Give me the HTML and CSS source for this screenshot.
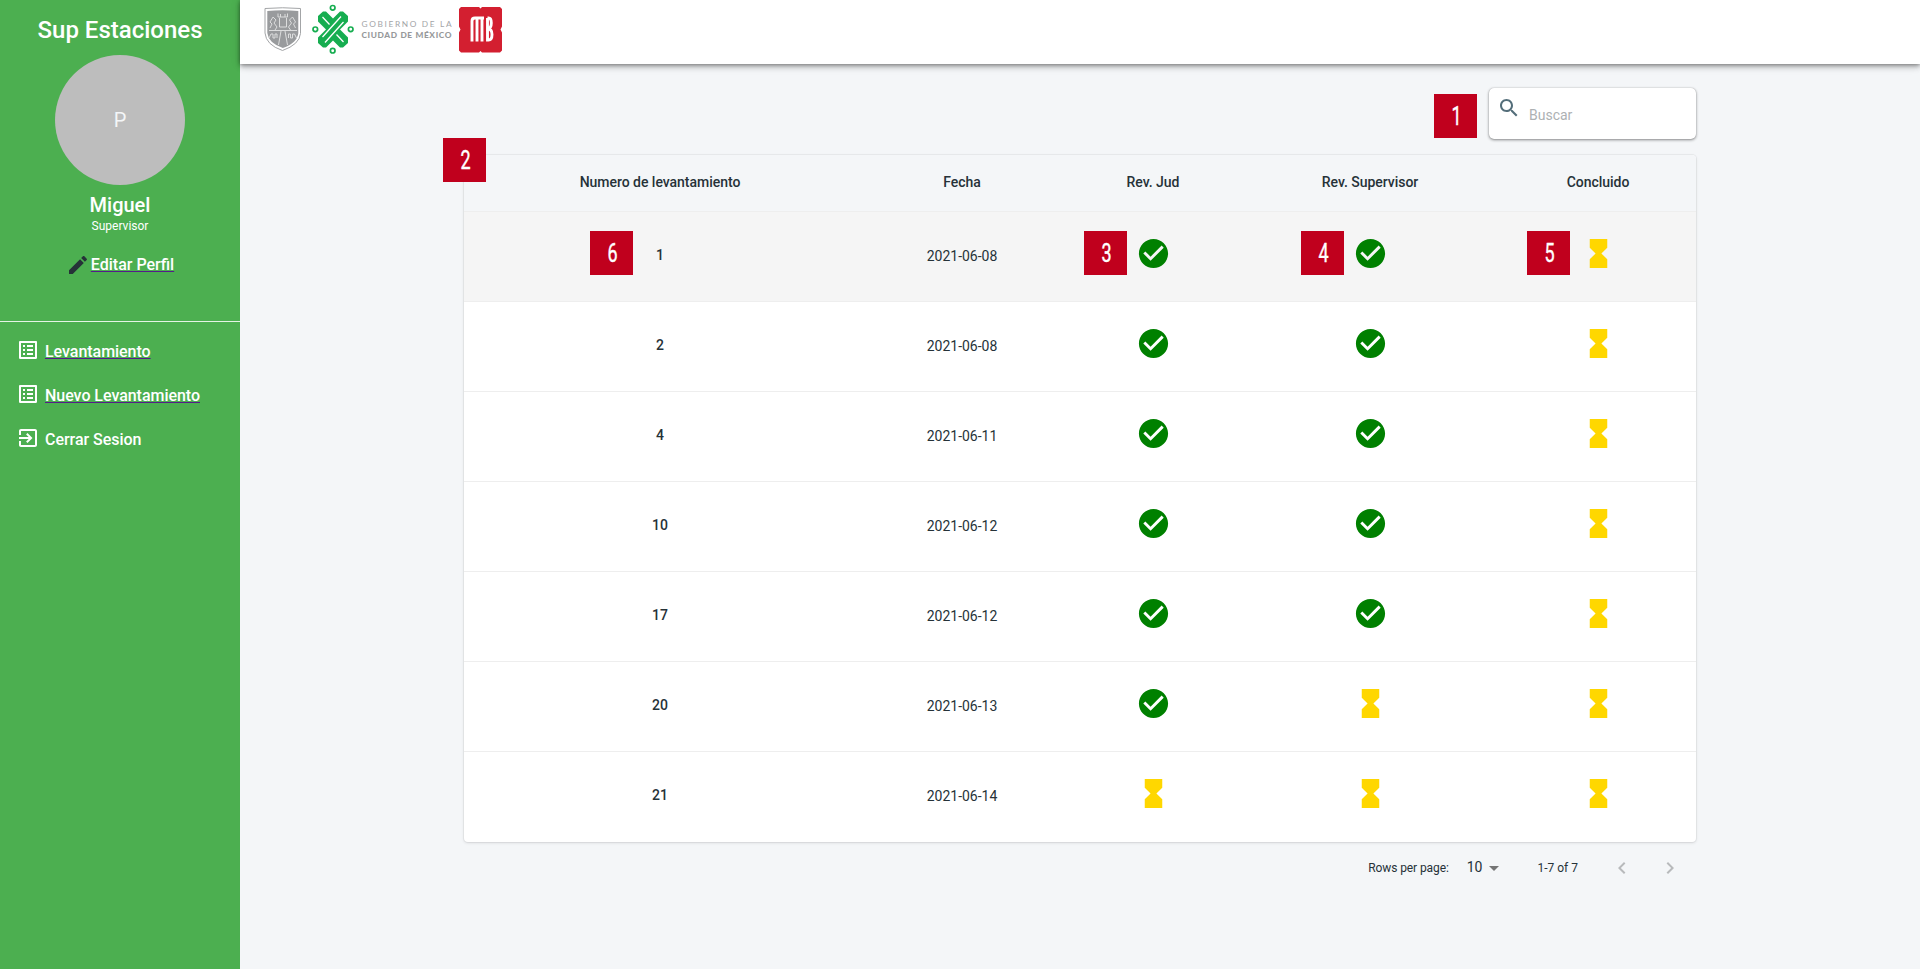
FILE: index.html
```html
<!DOCTYPE html>
<html lang="es">
<head>
<meta charset="utf-8">
<title>Sup Estaciones</title>
<link rel="stylesheet" href="styles.css">
</head>
<body>
<svg class="defs" width="0" height="0">
  <symbol id="check" viewBox="0 0 24 24"><path d="M12 2C6.48 2 2 6.48 2 12s4.48 10 10 10 10-4.48 10-10S17.52 2 12 2zm-2 15l-5-5 1.410-1.410L10 14.170l7.590-7.590L19 8l-9 9z"/></symbol>
  <symbol id="hourglass" viewBox="0 0 24 24"><path d="M6 2v6h.010L6 8.010 10 12l-4 4 .010.010H6V22h12v-5.990h-.010L18 16l-4-4 4-3.990-.010-.010H18V2H6z"/></symbol>
  <symbol id="list" viewBox="0 0 24 24"><path d="M19 5v14H5V5h14m1.100-2H3.900c-.5 0-.9.400-.9.900v16.200c0 .4.400.9.900.9h16.200c.4 0 .9-.5.900-.9V3.900c0-.5-.5-.9-.9-.9zM11 7h6v2h-6V7zm0 4h6v2h-6v-2zm0 4h6v2h-6zM7 7h2v2H7zm0 4h2v2H7zm0 4h2v2H7z"/></symbol>
</svg>
<div class="app">
  <aside class="sidebar">
    <h1 class="title">Sup Estaciones</h1>
    <div class="avatar">P</div>
    <div class="name">Miguel</div>
    <div class="role">Supervisor</div>
    <div class="edit">
      <svg class="icon dark" viewBox="0 0 24 24"><path d="M3 17.250V21h3.750L17.810 9.940l-3.750-3.750L3 17.250zM20.710 7.040c.390-.390.390-1.020 0-1.410l-2.340-2.340c-.390-.390-1.020-.390-1.410 0l-1.830 1.830 3.750 3.750 1.830-1.830z"/></svg>
      <a class="link">Editar Perfil</a>
    </div>
    <nav class="nav">
      <div class="item"><svg class="icon"><use href="#list"/></svg><a class="link">Levantamiento</a></div>
      <div class="item"><svg class="icon"><use href="#list"/></svg><a class="link">Nuevo Levantamiento</a></div>
      <div class="item"><svg class="icon" viewBox="0 0 24 24"><path d="M10.090 15.590L11.500 17l5-5-5-5-1.410 1.410L12.670 11H3v2h9.670l-2.580 2.590zM19 3H5c-1.110 0-2 .9-2 2v4h2V5h14v14H5v-4H3v4c0 1.100.890 2 2 2h14c1.100 0 2-.9 2-2V5c0-1.100-.9-2-2-2z"/></svg><span>Cerrar Sesion</span></div>
    </nav>
  </aside>
  <div class="content">
    <header class="topbar">
      <svg class="brand" width="246" height="56" viewBox="260 0 246 56">
        <path d="M265 8.500q17.500-1.500 35.500 0v25q-1 11-18 17Q266 45 265 33z" fill="#fff" stroke="#a3a5a7" stroke-width="1"/>
        <path d="M267.300 11q15-1.500 31 0V33q-1 10-15.500 15Q268.500 43 267.300 33z" fill="#999b9d"/>
        <path d="M278 13.500v3.500h9.500v-3.500M280.500 14v3M285 14v3M279.500 18v9h7v-9M270 28l2-4-2-2 3-5 3 3-2 3 3 4-2 3M295.500 28l-2-4 2-2-3-5-3 3 2 3-3 4 2 3M269 30.500h28M281 31l-2.500 14M285 31l2.500 14M269 38l2-4h2v4h2v-4h2v4M296.500 38l-2-4h-2v4h-2v-4h-2v4" fill="none" stroke="#dcdddd" stroke-width="1"/>
        <path d="M318 16l5-4.500h3l7 7 7-7h3l5 4.500v5.500l-8 8 8 8V43l-5 4.500h-3l-7-7-7 7h-3l-5-4.500v-5.500l8-8-8-8z" fill="#16ad50"/>
        <path d="M341 16.500l-18.500 20.500M343.500 22L325 42.500M322.500 17l7 7.500M336.500 34.500l7 7.500" fill="none" stroke="#fff" stroke-width="1.300"/>
        <g fill="none" stroke="#16ad50" stroke-width="1.700"><circle cx="332.700" cy="7.800" r="2.300"/><circle cx="315.300" cy="29.300" r="2.300"/><circle cx="350.700" cy="29.300" r="2.300"/><circle cx="332.700" cy="50.700" r="2.300"/></g>
        <text class="gov" x="361.500" y="27" textLength="90">GOBIERNO DE LA</text>
        <text class="gov bold" x="361.500" y="38" textLength="90">CIUDAD DE MÉXICO</text>
        <path d="M461 7h18l1.500 1.500L482 7h18l2 2v17.500l-1.500 3 1.500 3v18l-2 2h-18l-1.500-1.500-1.500 1.500h-18l-2-2v-18l1.500-3-1.500-3V9z" fill="#d31f30"/>
        <path d="M472 41.500V21q0-3 3-3h9M477 41.500V18.500M482 41.500V18.500M487.500 18h1q2.800 0 2.800 5t-3.300 6q4 0 4 5.500T488.500 40h-1V18" fill="none" stroke="#fff" stroke-width="2.900"/>
      </svg>
    </header>
    <main class="main">
      <div class="search">
        <svg class="icon" viewBox="0 0 24 24"><path d="M15.500 14h-.790l-.280-.270C15.410 12.590 16 11.110 16 9.500 16 5.910 13.090 3 9.500 3S3 5.910 3 9.500 5.910 16 9.500 16c1.610 0 3.090-.590 4.230-1.570l.270.280v.790l5 4.990L20.490 19l-4.990-5zm-6 0C7.010 14 5 11.990 5 9.500S7.010 5 9.500 5 14 7.010 14 9.500 11.990 14 9.500 14z"/></svg>
        <span class="placeholder">Buscar</span>
        <b class="marker m1"><i>1</i></b>
      </div>
      <section class="card">
        <b class="marker m2"><i>2</i></b>
        <div class="row head"><div>Numero de levantamiento</div><div>Fecha</div><div>Rev. Jud</div><div>Rev. Supervisor</div><div>Concluido</div></div>
        <div class="row hover"><div class="num">1<b class="marker m6"><i>6</i></b></div><div>2021-06-08</div><div><svg class="ok"><use href="#check"/></svg><b class="marker ms"><i>3</i></b></div><div><svg class="ok"><use href="#check"/></svg><b class="marker ms"><i>4</i></b></div><div><svg class="wait"><use href="#hourglass"/></svg><b class="marker ms m5"><i>5</i></b></div></div>
        <div class="row"><div class="num">2</div><div>2021-06-08</div><div><svg class="ok"><use href="#check"/></svg></div><div><svg class="ok"><use href="#check"/></svg></div><div><svg class="wait"><use href="#hourglass"/></svg></div></div>
        <div class="row"><div class="num">4</div><div>2021-06-11</div><div><svg class="ok"><use href="#check"/></svg></div><div><svg class="ok"><use href="#check"/></svg></div><div><svg class="wait"><use href="#hourglass"/></svg></div></div>
        <div class="row"><div class="num">10</div><div>2021-06-12</div><div><svg class="ok"><use href="#check"/></svg></div><div><svg class="ok"><use href="#check"/></svg></div><div><svg class="wait"><use href="#hourglass"/></svg></div></div>
        <div class="row"><div class="num">17</div><div>2021-06-12</div><div><svg class="ok"><use href="#check"/></svg></div><div><svg class="ok"><use href="#check"/></svg></div><div><svg class="wait"><use href="#hourglass"/></svg></div></div>
        <div class="row"><div class="num">20</div><div>2021-06-13</div><div><svg class="ok"><use href="#check"/></svg></div><div><svg class="wait"><use href="#hourglass"/></svg></div><div><svg class="wait"><use href="#hourglass"/></svg></div></div>
        <div class="row"><div class="num">21</div><div>2021-06-14</div><div><svg class="wait"><use href="#hourglass"/></svg></div><div><svg class="wait"><use href="#hourglass"/></svg></div><div><svg class="wait"><use href="#hourglass"/></svg></div></div>
      </section>
      <footer class="pager">
        <span class="label">Rows per page:</span>
        <span class="size">10</span>
        <svg class="icon caret" viewBox="0 0 24 24"><path d="M7 10l5 5 5-5z"/></svg>
        <span class="range">1-7 of 7</span>
        <svg class="icon arrow" viewBox="0 0 24 24"><path d="M15.410 7.410L14 6l-6 6 6 6 1.410-1.410L10.830 12z"/></svg>
        <svg class="icon arrow" viewBox="0 0 24 24"><path d="M10 6L8.590 7.410 13.170 12l-4.580 4.590L10 18l6-6z"/></svg>
      </footer>
    </main>
  </div>
</div>
</body>
</html>
```
FILE: styles.css
```css
* { box-sizing: border-box; }
html, body { height: 100%; overflow: hidden; }
body { margin: 0; font-family: Roboto, sans-serif; background: #f4f6f8; color: #263238; }
.defs { display: block; }
.app { display: flex; height: 100%; overflow: hidden; }
.icon { width: 24px; height: 24px; flex: none; fill: currentColor; }
.sidebar { width: 240px; background: #4caf50; color: #fff; display: flex; flex-direction: column; align-items: center; }
.title { margin: 16px 0 11px; font-size: 24px; font-weight: 500; line-height: 28px; }
.avatar { width: 130px; height: 130px; flex: none; border-radius: 50%; background: #bdbdbd; color: #f4f6f8; font-size: 20px; display: flex; align-items: center; justify-content: center; }
.name { margin-top: 8px; font-size: 20px; font-weight: 500; line-height: 24px; }
.role { margin-top: 2px; font-size: 12px; line-height: 14px; }
.edit { display: flex; align-items: center; height: 24px; margin-top: 20px; font-size: 16px; font-weight: 500; color: #fff; }
.dark { color: #263238; }
.edit .link { margin-left: 1px; padding-bottom: 2px; }
.link { text-decoration: underline; text-decoration-color: #551a8b; text-decoration-thickness: 1px; }
.nav { width: 100%; margin-top: 44px; border-top: 1px solid #e4f3e5; padding: 6px 16px; }
.item { display: flex; align-items: center; height: 44px; gap: 5px; font-size: 16px; font-weight: 500; letter-spacing: -.04px; }
.item span, .item a { padding-top: 3px; }
.content { flex: 1; display: flex; flex-direction: column; }
.topbar { height: 64px; background: #fff; padding-left: 20px; box-shadow: 0 2px 4px -1px rgba(0,0,0,.2), 0 4px 5px rgba(0,0,0,.14), 0 1px 10px rgba(0,0,0,.12), 0 0 4px rgba(0,0,0,.3); }
.brand { display: block; }
.gov { font: 8.300px Lato, sans-serif; fill: #a3a5a7; }
.bold { font-weight: 900; fill: #97999b; }
.main { width: 1232px; margin: 24px 0 0 224px; display: flex; flex-direction: column; }
.search { position: relative; align-self: flex-end; width: 207px; height: 51px; padding: 8px; display: flex; gap: 8px; border-radius: 5px; background: #fff; color: #546e7a; box-shadow: 0 1px 3px rgba(0,0,0,.45), 0 0 1px rgba(0,0,0,.25); }
.placeholder { padding-top: 11px; font-size: 14px; line-height: 17px; color: #adb1b3; }
.card { position: relative; margin-top: 16px; height: 687px; border-radius: 4px; background: #fff; box-shadow: 0 0 0 1px rgba(63,63,68,.05), 0 1px 3px rgba(63,63,68,.15); }
.row { display: grid; grid-template-columns: 392px 212px 170px 264px 192px; height: 90px; border-bottom: 1px solid #eee; text-align: center; font-size: 14px; line-height: 20px; }
.row > div { position: relative; padding-top: 34px; }
.row > .num { padding-top: 33px; font-weight: 500; }
.row:last-child { border: 0; }
.head { height: 57px; background: #f4f6f8; font-weight: 500; letter-spacing: -.03px; border-radius: 4px 4px 0 0; }
.head > div { padding-top: 17px; }
.hover { background: #f5f5f5; }
.ok, .wait { display: block; width: 35px; height: 35px; margin: -10px auto 0; fill: green; }
.wait { fill: gold; }
.marker { position: absolute; width: 43px; height: 44px; background: #c0001d; color: #fff; font-size: 25px; font-weight: 400; letter-spacing: 0; line-height: 46px; text-align: center; }
.marker i { display: block; font-style: normal; transform: translateX(1px) scaleX(.72); -webkit-text-stroke: .4px #fff; }
.m1 { left: -55px; top: 6px; }
.m2 { left: -21px; top: -17px; }
.m6 { left: 126px; top: 19px; }
.ms { left: calc(50% - 69px); top: 19px; }
.m5 { left: calc(50% - 71px); }
.pager { display: flex; align-items: center; height: 52px; padding-right: 14px; justify-content: flex-end; font-size: 12px; }
.label { letter-spacing: -.1px; }
.size { margin: -3px 0 0 18px; font-size: 14px; }
.caret { color: #757575; }
.range { margin: 0 32px 0 31px; }
.arrow { color: #b8babc; }
.arrow + .arrow { margin-left: 24px; }
```
